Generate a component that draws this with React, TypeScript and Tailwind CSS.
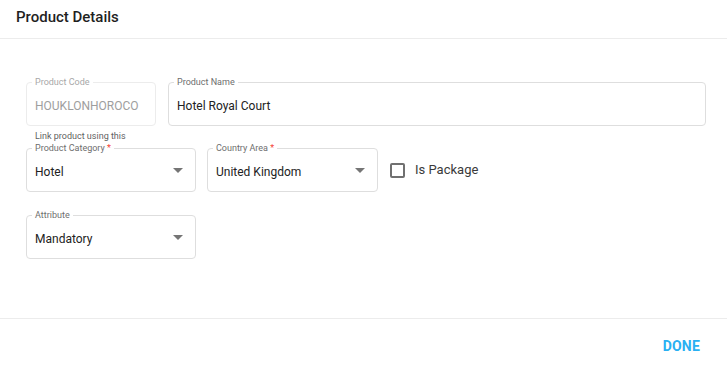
import React from "react";

// --- Sub Component: Outlined field with notched label ---
function Field({
  label,
  value,
  width,
  required,
  disabled,
  select,
  hint,
}: {
  label: string;
  value: string;
  width?: string;
  required?: boolean;
  disabled?: boolean;
  select?: boolean;
  hint?: string;
}) {
  return (
    <div
      className={`relative h-[44px] rounded-[4px] border flex items-center pl-[8px] pr-[12px] ${
        disabled ? "border-[#ececec]" : "border-[#dedede]"
      } ${width ?? "flex-1"}`}
    >
      {/* Label over the top border */}
      <span
        className={`absolute left-[5px] top-[-6px] bg-white px-[3px] text-[9px] leading-[10px] ${
          disabled ? "text-[#a8a8a8]" : "text-[#6e6e6e]"
        }`}
      >
        {hint && (
          <span className="absolute left-[3px] bottom-[12px] whitespace-nowrap text-[#5f5f5f]">
            {hint}
          </span>
        )}
        {label}
        {required && <span className="text-[#f44336]"> *</span>}
      </span>

      <span
        className={`flex-1 pt-[3px] text-[12px] ${
          disabled ? "text-[#9e9e9e]" : "text-[#222222]"
        }`}
      >
        {value}
      </span>

      {select && (
        <svg width="10" height="5" viewBox="0 0 10 5" className="shrink-0">
          <path d="M0 0 L10 0 L5 5 Z" fill="#757575" />
        </svg>
      )}
    </div>
  );
}

export default function App() {
  return (
    <div
      className="w-[727px] h-[369px] bg-white flex flex-col"
      style={{ fontFamily: "Roboto, 'Liberation Sans', sans-serif" }}
    >
      {/* Header */}
      <div className="h-[39px] shrink-0 border-b border-[#ececec] flex items-center px-[16px] pb-[4px]">
        <h2 className="text-[15px] font-medium text-[#1f1f1f]">
          Product Details
        </h2>
      </div>

      {/* Body */}
      <div className="flex-1 pt-[43px] pl-[26px] pr-[21px] flex flex-col gap-[22px]">
        <div className="flex gap-[12px]">
          <Field
            label="Product Code"
            value="HOUKLONHOROCO"
            width="w-[130px]"
            disabled
          />
          <Field label="Product Name" value="Hotel Royal Court" />
        </div>

        <div className="flex items-center">
          <Field
            label="Product Category"
            hint="Link product using this"
            value="Hotel"
            width="w-[170px]"
            required
            select
          />
          <div className="w-[11px]" />
          <Field
            label="Country Area"
            value="United Kingdom"
            width="w-[171px]"
            required
            select
          />
          <label className="ml-[12px] flex items-center gap-[10px] text-[13px] text-[#3a3a3a]">
            <span className="w-[15px] h-[15px] rounded-[2px] border-2 border-[#707070]" />
            Is Package
          </label>
        </div>

        <div className="flex mt-[1px]">
          <Field
            label="Attribute"
            value="Mandatory"
            width="w-[170px]"
            select
          />
        </div>
      </div>

      {/* Footer */}
      <div className="h-[51px] shrink-0 border-t border-[#ececec] flex items-center justify-end pr-[27px] pt-[4px]">
        <button className="text-[14px] font-bold tracking-[0.2px] text-[#29b0f2]">
          DONE
        </button>
      </div>
    </div>
  );
}
